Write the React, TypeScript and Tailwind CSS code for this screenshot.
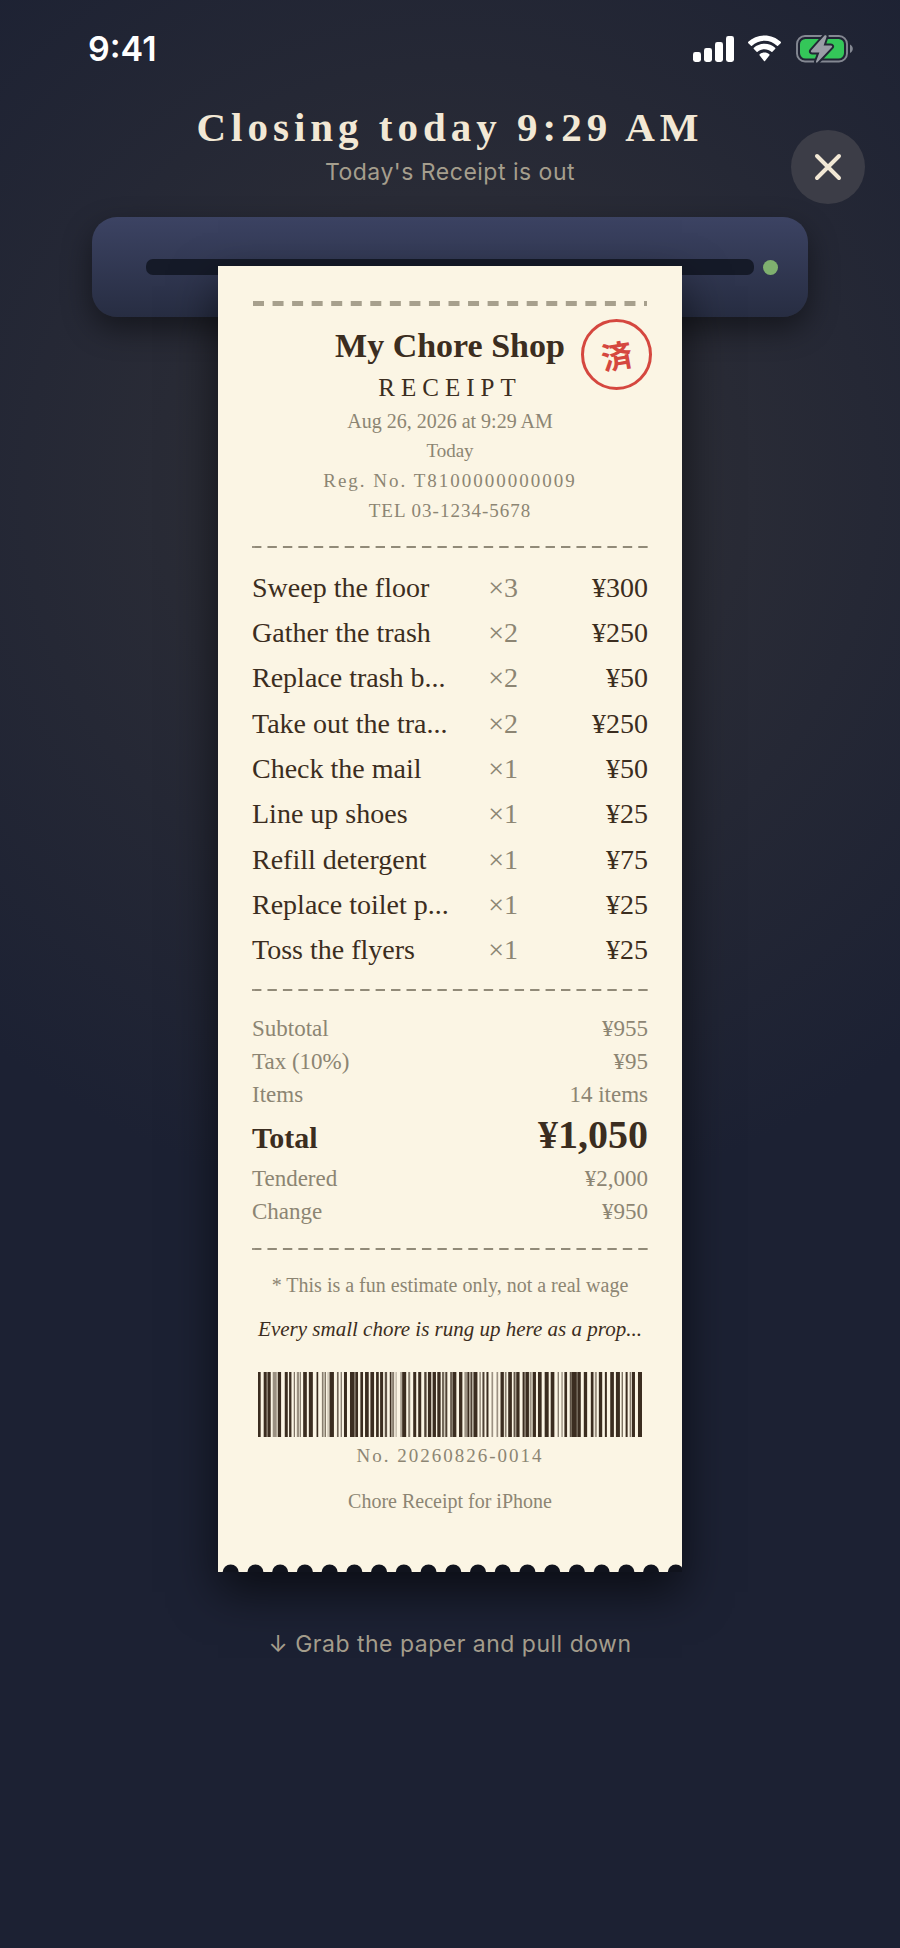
import { useState } from "react";

const items = [
  { name: "Sweep the floor", count: 3, price: 300 },
  { name: "Gather the trash", count: 2, price: 250 },
  { name: "Replace trash b...", count: 2, price: 50 },
  { name: "Take out the tra...", count: 2, price: 250 },
  { name: "Check the mail", count: 1, price: 50 },
  { name: "Line up shoes", count: 1, price: 25 },
  { name: "Refill detergent", count: 1, price: 75 },
  { name: "Replace toilet p...", count: 1, price: 25 },
  { name: "Toss the flyers", count: 1, price: 25 },
];

const totals = [
  { label: "Subtotal", value: "¥955" },
  { label: "Tax (10%)", value: "¥95" },
  { label: "Items", value: "14 items" },
  { label: "Total", value: "¥1,050", strong: true },
  { label: "Tendered", value: "¥2,000" },
  { label: "Change", value: "¥950" },
];

// [start, end, opacity]
const bars: [number, number, number][] = [
  [25, 33, 1], [42, 51, 1], [51, 54, 0.6], [54, 63, 1], [69, 81, 0.5],
  [84, 94, 1], [105, 114, 1], [118, 125, 1], [132, 135, 0.8], [141, 148, 0.5],
  [150, 153, 0.7], [160, 171, 1], [177, 189, 1], [200, 205, 1], [216, 221, 0.6],
  [224, 228, 0.7], [232, 239, 0.2], [239, 252, 1], [261, 266, 0.7], [272, 276, 0.6],
  [282, 291, 1], [300, 313, 1], [313, 316, 0.7], [316, 324, 1], [331, 339, 1],
  [345, 356, 1], [361, 372, 1], [378, 386, 1], [390, 399, 1], [404, 411, 0.8],
  [419, 424, 1], [426, 432, 0.6], [436, 440, 0.3], [450, 456, 0.4], [456, 468, 1],
  [474, 480, 0.6], [489, 498, 1], [504, 513, 1], [522, 529, 0.9], [533, 543, 1],
  [547, 557, 1], [561, 571, 1], [575, 582, 0.7], [585, 591, 0.9],
  [600, 604, 1], [604, 608, 0.6], [608, 618, 1], [626, 636, 1], [642, 651, 0.5],
  [651, 657, 1], [660, 666, 0.9], [669, 681, 1], [687, 691, 0.6], [696, 702, 0.9],
  [708, 714, 1], [723, 728, 0.5], [738, 743, 0.5], [750, 760, 1], [763, 768, 0.6],
  [773, 784, 1], [789, 795, 0.8], [797, 807, 1], [816, 822, 1], [822, 825, 0.6],
  [825, 835, 1], [837, 843, 0.5], [846, 856, 1], [862, 873, 1], [882, 894, 1],
  [900, 911, 1], [921, 924, 0.8], [932, 936, 0.5], [941, 949, 1], [957, 963, 0.8],
  [963, 978, 1], [978, 981, 0.8], [981, 990, 1], [999, 1009, 1], [1020, 1028, 1],
  [1032, 1038, 0.5], [1044, 1054, 1], [1062, 1068, 1], [1078, 1089, 1], [1095, 1107, 1],
  [1112, 1116, 0.7], [1124, 1130, 1], [1136, 1141, 0.6], [1143, 1152, 1], [1161, 1173, 1],
];

const holes = Array.from({ length: 19 }, (_, i) => 12.7 + i * 24.73);

const Perforation = () => (
  <svg className="block h-[5px] w-full" aria-hidden="true">
    <line x1="1" y1="2.5" x2="395" y2="2.5" stroke="#a7a08d" strokeWidth="5" strokeDasharray="11 8.55" />
  </svg>
);

const Divider = ({ className }: { className: string }) => (
  <svg className={`block h-0.5 w-full ${className}`} aria-hidden="true">
    <line x1="0" y1="1" x2="396" y2="1" stroke="#918a78" strokeWidth="1.8" strokeDasharray="9.4 6.05" />
  </svg>
);

const StatusBar = () => (
  <div className="flex h-[103px] items-center justify-between pr-[46px] pb-[5px] pl-[88px]">
    <span className="text-[34px] leading-10 font-semibold text-white">9:41</span>
    <svg width="162" height="30" viewBox="0 0 162 30" aria-hidden="true">
      <g fill="#fff">
        <rect x="1" y="18" width="8" height="10" rx="2.4" />
        <rect x="12" y="14" width="8" height="14" rx="2.4" />
        <rect x="23" y="8" width="8" height="20" rx="2.4" />
        <rect x="34" y="2" width="8" height="26" rx="2.4" />
      </g>
      <g transform="translate(55 1)" fill="#fff">
        <path d="M17.5 5.8c4.8 0 9.2 1.9 12.5 5 .3.3.7.3 1 0l2.7-2.6c.4-.4.4-1 0-1.4C29.5 2.8 23.7.5 17.5.5S5.5 2.8 1.3 6.8c-.4.4-.4 1 0 1.4L4 10.8c.3.3.7.3 1 0 3.3-3.1 7.7-5 12.5-5z" />
        <path d="M17.5 14.2c2.6 0 5 1 6.9 2.6.3.3.7.3 1 0l2.7-2.7c.4-.4.4-1 0-1.3-2.8-2.5-6.500-4-10.600-4s-7.800 1.500-10.600 4c-.4.3-.4.9 0 1.300l2.700 2.700c.3.3.7.3 1 0 1.900-1.600 4.300-2.600 6.900-2.600z" />
        <path d="M22.3 20.600c.4-.4.4-1 0-1.300-1.300-1-3-1.700-4.800-1.700s-3.500.7-4.800 1.700c-.4.3-.4.9 0 1.300l4.300 5.400c.3.3.7.3 1 0z" />
      </g>
      <g transform="translate(104 1)">
        <rect x="1" y="1" width="50" height="25.5" rx="8" fill="none" stroke="#848892" strokeWidth="1.9" />
        <rect x="4" y="4" width="44" height="19.5" rx="5.5" fill="#34c759" />
        <path d="M54 9.5v8.500c1.700-.7 2.800-2.300 2.800-4.200S55.700 10.200 54 9.500z" fill="#848892" />
        <path
          d="M28.5.6 15.2 15.6c-.7.8-.2 1.8.8 1.8h7.400l-3.300 8.900c-.5 1.300.8 1.800 1.600.8L35.800 12.200c.7-.8.2-1.800-.8-1.800h-7.400l3-8.700c.4-1.300-1.200-2.100-2.100-1.100z"
          fill="#9a9da6"
          stroke="#222735"
          strokeWidth="4"
          paintOrder="stroke"
        />
      </g>
    </svg>
  </div>
);

const App = () => {
  const [open, setOpen] = useState(true);

  return (
    <div className="min-h-screen overflow-hidden bg-[#1c2032] bg-[radial-gradient(circle_720px_at_50%_490px,#323238_0%,#1c2133_100%)] font-['Inter',sans-serif]">
      <StatusBar />

      <header className="relative text-center">
        <h1 className="font-['Liberation_Serif',serif] text-[41px] leading-12 font-bold tracking-[5px] text-[#f2e8d5]">
          Closing today 9:29 AM
        </h1>
        <p className="mt-[5px] text-[23px] leading-8 tracking-[0.5px] text-[#a59e8d]">
          Today's Receipt is out
        </p>
        <button
          type="button"
          aria-label="Close"
          onClick={() => setOpen(false)}
          className="absolute top-[27px] right-[35px] flex h-[74px] w-[74px] items-center justify-center rounded-full bg-[#3c3d47]"
        >
          <svg width="28" height="28" viewBox="0 0 28 28" aria-hidden="true">
            <path d="M3 3l22 22M25 3L3 25" stroke="#f2e8d5" strokeWidth="4" strokeLinecap="round" />
          </svg>
        </button>
      </header>

      <main>
        {/* printer */}
        <div className="mx-[92px] mt-[29px] flex h-[100px] items-center gap-[9px] rounded-[25px] bg-linear-to-b from-[#3c4363] to-[#272d42] pr-[30px] pl-[54px] shadow-[0_12px_30px_rgba(0,0,0,0.45)]">
          <div className="h-4 flex-1 rounded-[7px] bg-[#151a28]" />
          <div className="h-[15px] w-[15px] rounded-full bg-[#7fb06f]" />
        </div>

        {open && (
          <article className="relative mx-auto -mt-[51px] w-full max-w-[464px] bg-[#fbf5e4] px-[34px] pt-[35px] pb-14 text-center font-['Liberation_Serif',serif] text-[#3b2d20] shadow-[0_20px_44px_rgba(0,0,0,0.6)]">
            <Perforation />
            <h2 className="mt-5 text-[34px] leading-10 font-bold">My Chore Shop</h2>
            <p className="mt-1.5 text-[25px] leading-8 tracking-[6px]">RECEIPT</p>
            <div className="mt-0.5 text-[19px] leading-[30px] text-[#8c8573]">
              <p className="text-[20px]">Aug 26, 2026 at 9:29 AM</p>
              <p>Today</p>
              <p className="tracking-[2px]">Reg. No. T8100000000009</p>
              <p className="tracking-[1px]">TEL 03-1234-5678</p>
            </div>

            <div className="absolute top-[53px] right-[30px] flex h-[71px] w-[71px] items-center justify-center rounded-full border-3 border-[#d5473f]">
              <span className="-rotate-10 font-['Noto_Sans_CJK_JP',sans-serif] text-[31px] leading-8 font-bold text-[#d5473f]">
                済
              </span>
            </div>

            <Divider className="mt-5" />

            <table className="mt-[17px] h-[408px] w-full text-[28px] leading-10">
              <tbody>
                {items.map((item) => (
                  <tr key={item.name}>
                    <td className="p-0 text-left whitespace-nowrap">{item.name}</td>
                    <td className="w-[26px] p-0 text-left text-[#8c8573]">×{item.count}</td>
                    <td className="w-[130px] p-0 text-right">¥{item.price}</td>
                  </tr>
                ))}
              </tbody>
            </table>

            <Divider className="mt-4" />

            <dl className="mt-[21px]">
              {totals.map((row) =>
                row.strong ? (
                  <div key={row.label} className="flex items-baseline justify-between leading-12 font-bold">
                    <dt className="text-[30px]">{row.label}</dt>
                    <dd className="text-[40px]">{row.value}</dd>
                  </div>
                ) : (
                  <div
                    key={row.label}
                    className="flex items-baseline justify-between text-[23px] leading-[33px] text-[#8c8573]"
                  >
                    <dt>{row.label}</dt>
                    <dd>{row.value}</dd>
                  </div>
                ),
              )}
            </dl>

            <Divider className="mt-5" />

            <p className="mt-[22px] text-[20px] leading-[26px] whitespace-nowrap text-[#8c8573]">
              * This is a fun estimate only, not a real wage
            </p>
            <p className="mt-4 text-[21px] leading-[30px] whitespace-nowrap italic">
              Every small chore is rung up here as a prop...
            </p>

            <div className="mt-7 px-1.5">
              <svg
                className="block h-[65px] w-full"
                viewBox="25 0 1148 195"
                preserveAspectRatio="none"
                role="img"
                aria-label="Barcode"
              >
                {bars.map(([start, end, opacity]) => (
                  <rect key={start} x={start} y="0" width={end - start} height="195" fill="#3b2d20" opacity={opacity} />
                ))}
              </svg>
            </div>
            <div className="mt-1 text-[#8c8573]">
              <p className="text-[19px] leading-[30px] tracking-[2px]">No. 20260826-0014</p>
              <p className="mt-[15px] text-[20px] leading-[30px]">Chore Receipt for iPhone</p>
            </div>

            {/* torn edge */}
            <svg className="absolute bottom-0 left-0 h-2 w-full" aria-hidden="true">
              {holes.map((cx) => (
                <circle key={cx} cx={cx} cy="8.5" r="8" fill="#10131d" />
              ))}
            </svg>
          </article>
        )}

        <p className="mt-14 text-center text-[23px] leading-8 tracking-[0.5px] text-[#a59e8d]">
          ↓ Grab the paper and pull down
        </p>
      </main>
    </div>
  );
};

export default App;
